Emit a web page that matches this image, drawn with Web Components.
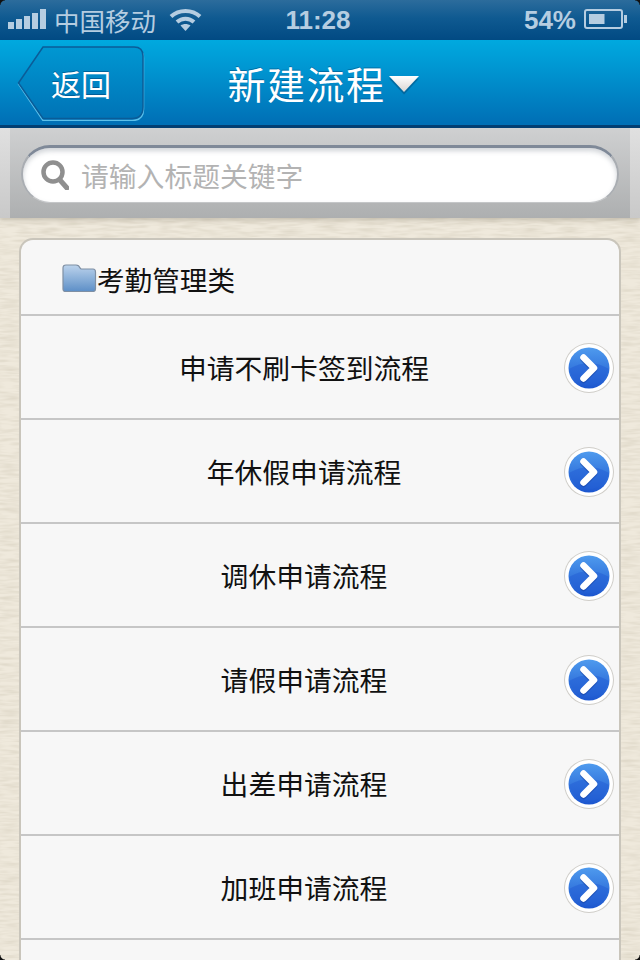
<!DOCTYPE html>
<html lang="zh">
<head>
<meta charset="utf-8">
<title>新建流程</title>
<style>
html,body{margin:0;padding:0;height:960px;overflow:hidden;background:#eee8db;}
body{font-family:"Noto Sans CJK SC","Liberation Sans",sans-serif;}
</style>
</head>
<body>
<flow-page>
  <status-bar slot="top" carrier="中国移动" time="11:28" battery="54%"></status-bar>
  <nav-bar slot="top" back="返回">新建流程</nav-bar>
  <search-bar slot="top" placeholder="请输入标题关键字"></search-bar>
  <flow-list title="考勤管理类">
    <flow-row>申请不刷卡签到流程</flow-row>
    <flow-row>年休假申请流程</flow-row>
    <flow-row>调休申请流程</flow-row>
    <flow-row>请假申请流程</flow-row>
    <flow-row>出差申请流程</flow-row>
    <flow-row>加班申请流程</flow-row>
    <flow-row></flow-row>
  </flow-list>
</flow-page>
<script>
class FlowPage extends HTMLElement {
    constructor() {
        super();
        this.attachShadow({mode:'open'});
        this.shadowRoot.innerHTML = `
        <style>
        :host{display:block;position:relative;width:640px;height:960px;overflow:hidden;}
        .paper{position:absolute;inset:0;width:640px;height:960px;}
        .stack{position:relative;display:flex;flex-direction:column;height:960px;}
        .body{padding:20px 19px 0;}
        .corner{position:absolute;width:5px;height:5px;}
        .tl{left:0;top:0;background:radial-gradient(circle at 100% 100%,transparent 4px,#111 5px);}
        .tr{right:0;top:0;background:radial-gradient(circle at 0 100%,transparent 4px,#111 5px);}
        .bl{left:0;bottom:0;background:radial-gradient(circle at 100% 0,transparent 4px,#111 5px);}
        .br{right:0;bottom:0;background:radial-gradient(circle at 0 0,transparent 4px,#111 5px);}
        </style>
        <!-- linen texture behind the list -->
        <svg class="paper" xmlns="http://www.w3.org/2000/svg">
            <filter id="linen" x="0" y="0" width="100%" height="100%">
                <feTurbulence type="fractalNoise" baseFrequency="0.05 0.35" numOctaves="2" seed="4"/>
                <feColorMatrix values="0 0 0 0 .62  0 0 0 0 .57  0 0 0 0 .46  .9 0 0 0 -.32"/>
            </filter>
            <rect width="640" height="960" fill="#efe9dc"/>
            <rect width="640" height="960" filter="url(#linen)"/>
        </svg>
        <div class="stack">
            <slot name="top"></slot>
            <div class="body"><slot></slot></div>
        </div>
        <i class="corner tl"></i><i class="corner tr"></i><i class="corner bl"></i><i class="corner br"></i>
        `;
    }
}
customElements.define('flow-page',FlowPage)

class StatusBar extends HTMLElement {
    constructor() {
        super();
        this.attachShadow({mode:'open'});
        this.shadowRoot.innerHTML = `
        <style>
        :host{display:block;height:40px;color:#b5cde1;background:linear-gradient(#2c6c9c,#0f5a91 45%,#014a83);}
        .bar{display:grid;grid-template-columns:1fr auto 1fr;align-items:center;height:40px;padding:0 8px;}
        .left,.right{display:flex;align-items:center;}
        .right{justify-content:flex-end;gap:8px;}
        .carrier{font-size:25.5px;margin:0 13px 0 8px;line-height:40px;}
        .time{font:bold 26px "Liberation Sans",sans-serif;line-height:40px;margin-right:4px;}
        .pct{font:bold 26px "Liberation Sans",sans-serif;line-height:40px;}
        svg{display:block;}
        </style>
        <div class="bar">
            <div class="left">
                <svg width="38" height="22" viewBox="0 0 38 22" fill="currentColor">
                    <rect x="0" y="13" width="6" height="7"/>
                    <rect x="8" y="10" width="6" height="10"/>
                    <rect x="16" y="7" width="6" height="13"/>
                    <rect x="24" y="4" width="6" height="16"/>
                    <rect x="32" y="0" width="6" height="20"/>
                </svg>
                <span class="carrier"></span>
                <svg width="33" height="24" viewBox="0 0 33 24" fill="none" stroke="currentColor" stroke-width="4">
                    <path d="M2 8.5C10 1 23 1 31 8.5"/>
                    <path d="M8 14C13 9.5 20 9.5 25 14"/>
                    <path d="M16.5 23L11.5 17.5C14.5 15.5 18.5 15.5 21.5 17.5Z" fill="currentColor" stroke="none"/>
                </svg>
            </div>
            <span class="time"></span>
            <div class="right">
                <span class="pct"></span>
                <svg width="45" height="22" viewBox="0 0 45 22" style="margin-right:3px">
                    <rect x="1" y="1" width="37" height="18" rx="2" fill="none" stroke="currentColor" stroke-width="2"/>
                    <rect x="5" y="5" width="15.5" height="10" fill="currentColor"/>
                    <path d="M40 6h3v8h-3z" fill="currentColor"/>
                </svg>
            </div>
        </div>
        `;
    }
    connectedCallback() {
        const root = this.shadowRoot;
        root.querySelector('.carrier').textContent = this.getAttribute('carrier');
        root.querySelector('.time').textContent = this.getAttribute('time');
        root.querySelector('.pct').textContent = this.getAttribute('battery');
    }
}
customElements.define('status-bar',StatusBar)

class NavBar extends HTMLElement {
    constructor() {
        super();
        this.attachShadow({mode:'open'});
        this.shadowRoot.innerHTML = `
        <style>
        :host{display:block;height:88px;box-sizing:border-box;color:#fff;
            background:linear-gradient(#00a9df,#0098d3 30%,#0070b6 97%);
            border-bottom:3px solid #033f73;}
        .bar{display:grid;grid-template-columns:1fr auto 1fr;align-items:center;height:85px;padding-left:17px;}
        .back{position:relative;display:flex;align-items:center;justify-content:flex-end;width:128px;height:76px;box-sizing:border-box;padding-right:34px;margin-top:1px;
            font-size:30px;text-shadow:0 -1px 0 rgba(0,50,100,.45);}
        .back svg{position:absolute;left:0;top:0;}
        .back span{position:relative;}
        .title{display:flex;align-items:center;margin-right:10px;font-size:38px;letter-spacing:1.5px;line-height:85px;text-shadow:0 -1px 0 rgba(0,50,100,.4);}
        .title svg{display:block;margin:3px 0 0 2px;}
        </style>
        <div class="bar">
            <div><div class="back">
                <svg width="128" height="76" viewBox="0 0 128 76">
                    <defs><linearGradient id="backFill" x1="0" y1="0" x2="0" y2="1">
                        <stop offset="0" stop-color="#0097d2"/><stop offset="1" stop-color="#0073b6"/>
                    </linearGradient></defs>
                    <path d="M1.5 38L26 2.5H117Q126.5 2.5 126.5 12V63Q126.5 74.5 115 74.5H26Z" fill="none" stroke="#5cc0ea" stroke-width="1.5" transform="translate(0 1)"/>
                    <path d="M1.5 38L26 2H117Q126 2 126 11V62Q126 73.5 115 73.5H26Z" fill="url(#backFill)" stroke="#0a5c98" stroke-width="1.5"/>
                </svg>
                <span class="label"></span>
            </div></div>
            <div class="title">
                <slot></slot>
                <svg width="32" height="22" viewBox="0 0 32 22">
                    <defs><linearGradient id="caret" x1="0" y1="0" x2="0" y2="1">
                        <stop offset="0" stop-color="#fff"/><stop offset="1" stop-color="#d9d5d2"/>
                    </linearGradient></defs>
                    <path d="M1 4H31L16 20Z" fill="#04507f" opacity=".55" transform="translate(0 1.5)"/>
                    <path d="M1 3H31L16 19Z" fill="url(#caret)"/>
                </svg>
            </div>
            <div></div>
        </div>
        `;
    }
    connectedCallback() {
        this.shadowRoot.querySelector('.label').textContent = this.getAttribute('back');
    }
}
customElements.define('nav-bar',NavBar)

class SearchBar extends HTMLElement {
    constructor() {
        super();
        this.attachShadow({mode:'open'});
        this.shadowRoot.innerHTML = `
        <style>
        :host{display:block;height:90px;background:linear-gradient(#e0e0e0,#c9c9c9);box-shadow:0 3px 4px rgba(120,110,90,.25);}
        .band{height:90px;box-sizing:border-box;margin:0 10px;padding:17px 11px 15px;background:linear-gradient(#cfd0d1,#adafb0);}
        .field{display:flex;align-items:center;gap:12px;height:58px;box-sizing:border-box;padding:0 18px;
            border-radius:29px;background:#fff;
            border:2px solid #a9adb2;border-top:3px solid #7f8998;border-bottom:1px solid #c4c6c8;
            box-shadow:inset 0 3px 5px rgba(90,100,115,.28);
            font-size:27.8px;color:#b3b3b3;}
        svg{display:block;flex:none;}
        </style>
        <div class="band">
            <div class="field">
                <svg width="28" height="30" viewBox="0 0 28 30" fill="none" stroke="#8f8f8f">
                    <circle cx="12" cy="12" r="9.5" stroke-width="4.5"/>
                    <path d="M18.5 19.5L26 28" stroke-width="5" stroke-linecap="round"/>
                </svg>
                <span class="hint"></span>
            </div>
        </div>
        `;
    }
    connectedCallback() {
        this.shadowRoot.querySelector('.hint').textContent = this.getAttribute('placeholder');
    }
}
customElements.define('search-bar',SearchBar)

class FlowList extends HTMLElement {
    constructor() {
        super();
        this.attachShadow({mode:'open'});
        this.shadowRoot.innerHTML = `
        <style>
        :host{display:block;box-sizing:border-box;background:#f7f7f7;color:#111;
            border:2px solid #c9c5bb;border-bottom:none;border-radius:14px 14px 0 0;}
        .head{display:flex;align-items:center;height:74px;padding:3px 0 0 41px;box-sizing:border-box;font-size:27.6px;}
        svg{display:block;flex:none;margin-top:-1px;}
        </style>
        <div class="head">
            <svg width="35" height="28" viewBox="0 0 35 28">
                <defs><linearGradient id="folder" x1="0" y1="0" x2="0" y2="1">
                    <stop offset="0" stop-color="#bcd3ec"/><stop offset="1" stop-color="#5d8fc7"/>
                </linearGradient></defs>
                <path d="M1 25V4Q1 1 4 1H14Q17 1 18 4L19 5H31Q33.500 5 33.500 8V25Q33.500 27.500 31 27.500H3.500Q1 27.500 1 25Z" fill="url(#folder)" stroke="#7f8fa3" stroke-width="1.200"/>
            </svg>
            <span class="name"></span>
        </div>
        <slot></slot>
        `;
    }
    connectedCallback() {
        this.shadowRoot.querySelector('.name').textContent = this.getAttribute('title');
    }
}
customElements.define('flow-list',FlowList)

class FlowRow extends HTMLElement {
    constructor() {
        super();
        this.attachShadow({mode:'open'});
        this.shadowRoot.innerHTML = `
        <style>
        :host{display:flex;align-items:center;height:104px;box-sizing:border-box;border-top:2px solid #c6c6c6;padding-right:4px;font-size:27.8px;color:#111;}
        .text{flex:1;text-align:center;}
        svg{display:block;flex:none;margin:2px 0 0 -24px;}
        </style>
        <div class="text"><slot></slot></div>
        <svg width="52" height="52" viewBox="0 0 52 52">
            <defs>
                <linearGradient id="disc" x1="0" y1="0" x2="0" y2="1">
                    <stop offset="0" stop-color="#4f9bee"/><stop offset="1" stop-color="#1c56cf"/>
                </linearGradient>
            </defs>
            <circle cx="26" cy="26" r="25" fill="#cfcdc8"/>
            <circle cx="26" cy="26" r="24" fill="#fff"/>
            <circle cx="26" cy="26" r="20.500" fill="url(#disc)"/>
            <path d="M6 27Q26 15 46 27A20.500 20.500 0 0 1 6 27Z" fill="#2461d6" opacity=".55"/>
            <path d="M20.500 15.500L31 26L20.500 36.500" fill="none" stroke="#17429f" stroke-width="6.500" stroke-linecap="round" stroke-linejoin="round" opacity=".5" transform="translate(0 1.500)"/>
            <path d="M20.500 15.500L31 26L20.500 36.500" fill="none" stroke="#fff" stroke-width="6.500" stroke-linecap="round" stroke-linejoin="round"/>
        </svg>
        `;
    }
    connectedCallback() {
        // the row cut off at the bottom of the screen has no arrow in view
        if (!this.textContent.trim()) this.shadowRoot.querySelector('svg').style.visibility = 'hidden';
    }
}
customElements.define('flow-row',FlowRow)
</script>
</body>
</html>
